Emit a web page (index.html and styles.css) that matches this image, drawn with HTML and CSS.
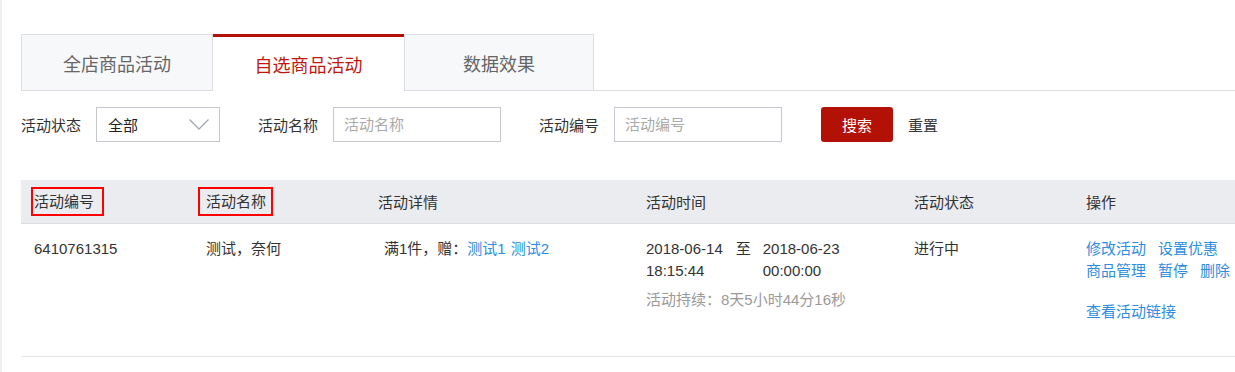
FILE: index.html
```html
<!DOCTYPE html>
<html lang="zh-CN">
<head>
    <meta charset="UTF-8">
    <title>自选商品活动</title>
    <link rel="stylesheet" href="styles.css">
</head>
<body>
<div class="page">

    <ul class="tabs">
        <li class="tab tab-first">全店商品活动</li>
        <li class="tab active">自选商品活动</li>
        <li class="tab tab-last">数据效果</li>
    </ul>

    <div class="filters">
        <div class="field">
            <label>活动状态</label>
            <div class="select">
                <span>全部</span>
                <svg width="20" height="11" viewBox="0 0 20 11"><polyline points="0.5,0.5 10,10 19.5,0.5" fill="none" stroke="#a3a7b0" stroke-width="1.3"/></svg>
            </div>
        </div>
        <div class="field">
            <label>活动名称</label>
            <input class="input" type="text" placeholder="活动名称">
        </div>
        <div class="field">
            <label>活动编号</label>
            <input class="input" type="text" placeholder="活动编号">
        </div>
        <button class="btn-search">搜索</button>
        <a class="reset">重置</a>
    </div>

    <table class="list">
        <colgroup>
            <col style="width:172px">
            <col style="width:172px">
            <col style="width:268px">
            <col style="width:268px">
            <col style="width:172px">
            <col>
        </colgroup>
        <thead>
            <tr>
                <th><span class="mark mark-id">活动编号</span></th>
                <th><span class="mark mark-name">活动名称</span></th>
                <th>活动详情</th>
                <th>活动时间</th>
                <th>活动状态</th>
                <th>操作</th>
            </tr>
        </thead>
        <tbody>
            <tr>
                <td>6410761315</td>
                <td>测试，奈何</td>
                <td><div class="detail">满1件，赠：<a>测试1</a> <a>测试2</a></div></td>
                <td>
                    <div class="period">
                        <div>2018-06-14<br>18:15:44</div>
                        <span class="to">至</span>
                        <div>2018-06-23<br>00:00:00</div>
                    </div>
                    <div class="duration">活动持续：8天5小时44分16秒</div>
                </td>
                <td>进行中</td>
                <td class="ops">
                    <div><a>修改活动</a><a>设置优惠</a></div>
                    <div><a>商品管理</a><a>暂停</a><a>删除</a></div>
                    <div class="ops-link"><a>查看活动链接</a></div>
                </td>
            </tr>
        </tbody>
    </table>

</div>
</body>
</html>
```

FILE: styles.css
```css
html, body {
    margin: 0;
    padding: 0;
    background: #fff;
}
body {
    font-family: "Liberation Sans", "Noto Sans CJK SC", sans-serif;
    font-size: 15px;
    color: #333;
}
.page {
    min-height: 372px;
    box-sizing: border-box;
    border-left: 2px solid #f0f0f2;
    padding: 34px 0 0 19px;
}

/* tabs */
.tabs {
    display: flex;
    list-style: none;
    margin: 0;
    padding: 0;
    height: 56px;
    border-bottom: 1px solid #dcdee3;
}
.tab {
    box-sizing: border-box;
    width: 191px;
    height: 57px;
    display: flex;
    align-items: center;
    justify-content: center;
    font-size: 18px;
    color: #666;
    background: #f7f8fa;
    border: 1px solid #dcdee3;
}
.tab-first {
    width: 192px;
}
.tab-last {
    width: 190px;
}
.tab + .tab {
    border-left: none;
}
.tab.active {
    background: #fff;
    color: #c2170d;
    border: none;
    border-top: 3px solid #b31106;
    border-bottom: 1px solid #fff;
}
.tab.active + .tab {
    border-left: 1px solid #dcdee3;
}

/* filters */
.filters {
    display: flex;
    align-items: center;
    margin-top: 16px;
    height: 35px;
}
.field {
    display: flex;
    align-items: center;
    gap: 15px;
    margin-right: 38px;
}
.field label {
    width: 60px;
    color: #333;
}
.select {
    box-sizing: border-box;
    width: 124px;
    height: 35px;
    border: 1px solid #c5c8ce;
    display: flex;
    align-items: center;
    justify-content: space-between;
    padding: 0 10px 0 11px;
    color: #222;
}
.input {
    box-sizing: border-box;
    width: 168px;
    height: 35px;
    border: 1px solid #c5c8ce;
    padding: 0 10px;
    font: inherit;
    outline: none;
}
.input::placeholder {
    color: #aaa;
}
.btn-search {
    box-sizing: border-box;
    width: 72px;
    height: 35px;
    margin-left: 1px;
    border: none;
    border-radius: 3px;
    background: #b31106;
    color: #fff;
    font: inherit;
}
.reset {
    margin-left: 15px;
    color: #333;
}

/* table */
.list {
    width: 100%;
    margin-top: 38px;
    border-collapse: collapse;
    table-layout: fixed;
}
.list th {
    height: 43px;
    padding: 0 0 0 13px;
    background: #ebecf0;
    border-bottom: 1px solid #dcdde1;
    text-align: left;
    font-weight: normal;
    color: #333;
    white-space: nowrap;
}
.list td {
    vertical-align: top;
    padding: 14px 0 33px 13px;
    line-height: 22px;
    border-bottom: 1px solid #e3e4e8;
    white-space: nowrap;
}
.list a {
    color: #2e8ddf;
    cursor: pointer;
}
.mark {
    display: inline-block;
    border: 2px solid #f00;
    line-height: 21px;
    padding: 2px 0;
}
.mark-id {
    margin-left: -3px;
    padding-left: 1px;
    padding-right: 8px;
}
.mark-name {
    margin-left: -8px;
    padding-left: 6px;
    padding-right: 5px;
}
.detail {
    padding-left: 6px;
}
.detail a + a {
    margin-left: 1px;
}
.period {
    display: flex;
    align-items: flex-start;
}
.to {
    margin: 0 12px 0 13px;
}
.duration {
    margin-top: 7px;
    color: #999;
}
.ops a {
    margin-right: 12px;
}
.ops-link {
    margin-top: 19px;
}
```
